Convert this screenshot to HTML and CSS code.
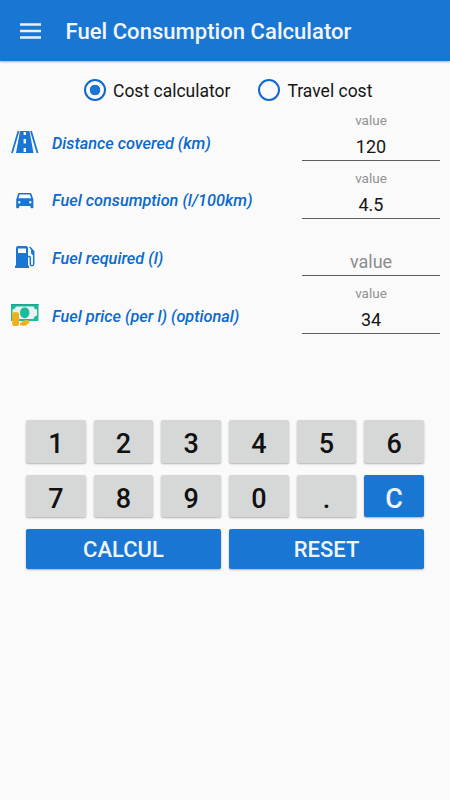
FILE: index.html
```html
<!DOCTYPE html>
<html lang="en">
<head>
    <meta charset="UTF-8">
    <meta name="viewport" content="width=device-width, initial-scale=1.0">
    <title>Fuel Consumption Calculator</title>
    <link rel="stylesheet" href="styles.css">
</head>
<body>
    <header class="app-bar">
        <svg class="menu-icon" width="21" height="16" viewBox="0 0 21 16">
            <path d="M0 1.5h21M0 8h21M0 14.5h21" stroke="#e9f1fa" stroke-width="2.3"/>
        </svg>
        <h1>Fuel Consumption Calculator</h1>
    </header>

    <div class="mode-select">
        <label class="mode">
            <input type="radio" name="mode" value="cost" checked>
            <span>Cost calculator</span>
        </label>
        <label class="mode">
            <input type="radio" name="mode" value="travel">
            <span>Travel cost</span>
        </label>
    </div>

    <form class="fields" id="calc-form">
        <div class="row">
            <svg class="row-icon" width="28" height="24" viewBox="0 0 28 24">
                <path fill="#1976d2" d="M9 1h9.5l4 22H5z"/>
                <path stroke="#1976d2" stroke-width="1.8" d="M7.5 1L1 23M20 1l6.5 22"/>
                <path stroke="#fafafa" stroke-width="2.4" d="M13.8 2v3M13.8 9v4.5M13.8 18v4"/>
            </svg>
            <label for="distance">Distance covered (km)</label>
            <div class="field">
                <span class="hint">value</span>
                <input type="text" id="distance" value="120">
            </div>
        </div>
        <div class="row">
            <svg class="row-icon" width="28" height="24" viewBox="0 0 28 24">
                <path fill="#1976d2" fill-rule="evenodd" d="M20.5 5.9c-.2-.6-.6-.9-1.200-.9H8.200c-.6 0-1 .3-1.200.9L5.200 11.400v8c0 .5.3.8.7.8h1.500c.5 0 .8-.3.8-.8v-1.400h11.300v1.400c0 .5.3.8.8.8h1.300c.5 0 .8-.3.8-.8v-8zM8.300 15.400a1.200 1.200 0 1 1 0-2.400 1.200 1.200 0 0 1 0 2.400zm11 0a1.200 1.200 0 1 1 0-2.400 1.200 1.200 0 0 1 0 2.400zM7.400 10.200l1.200-3.600h10.300l1.200 3.600z"/>
            </svg>
            <label for="consumption">Fuel consumption (l/100km)</label>
            <div class="field">
                <span class="hint">value</span>
                <input type="text" id="consumption" value="4.5">
            </div>
        </div>
        <div class="row">
            <svg class="row-icon" width="28" height="24" viewBox="0 0 28 24">
                <path fill="#1976d2" fill-rule="evenodd" d="M7 1h8q2 0 2 2v17.500h1V23H4v-2.500h1V3q0-2 2-2zm0 2.600V8h8V3.600z"/>
                <path fill="none" stroke="#1976d2" stroke-width="1.500" d="M17 11.500h1.300q1 0 1 1.200v6.300q0 1.700 1.700 1.700t1.700-1.700V6.500L18.600 2"/>
                <path fill="#1976d2" d="M20 5l3 1v4h-1.500Q20 9 20 7.500z"/>
            </svg>
            <label for="required">Fuel required (l)</label>
            <div class="field">
                <span class="hint"></span>
                <input type="text" id="required" placeholder="value">
            </div>
        </div>
        <div class="row">
            <svg class="row-icon" width="28" height="24" viewBox="0 0 28 24">
                <path fill="#1abc9c" d="M0 1h27.500v17H0z"/>
                <path fill="#17a78b" d="M0 1h27.500v1.200H0z"/>
                <path fill="#ecf0f1" d="M5 3.500h17.500q.5 2.500 3.500 3v6q-3 .5-3.500 3.500H5q-.5-3-3.500-3.500v-6q3-.5 3.500-3z"/>
                <ellipse cx="13.700" cy="9.700" rx="4.700" ry="5.500" fill="#1abc9c"/>
                <rect x="1.200" y="9" width="6.800" height="14" rx="2" fill="#f5b81c"/>
                <path stroke="#e39a16" stroke-width=".6" d="M1.500 11.800h6.200M1.500 14.300h6.200M1.500 16.800h6.200M1.500 19.300h6.200M1.800 21.800h5.800"/>
                <ellipse cx="14.500" cy="19.300" rx="4.200" ry="2.200" fill="#f5b81c" transform="rotate(-12 14.500 19.300)"/>
                <ellipse cx="12.500" cy="21" rx="3.500" ry="1.700" fill="#f0a91a"/>
            </svg>
            <label for="price">Fuel price (per l) (optional)</label>
            <div class="field">
                <span class="hint">value</span>
                <input type="text" id="price" value="34">
            </div>
        </div>
    </form>

    <div class="keypad">
        <button type="button">1</button>
        <button type="button">2</button>
        <button type="button">3</button>
        <button type="button">4</button>
        <button type="button">5</button>
        <button type="button">6</button>
        <button type="button">7</button>
        <button type="button">8</button>
        <button type="button">9</button>
        <button type="button">0</button>
        <button type="button">.</button>
        <button type="button" class="blue">C</button>
        <button type="button" class="blue action">CALCUL</button>
        <button type="button" class="blue action">RESET</button>
    </div>
</body>
</html>
```
FILE: styles.css
```css
* {
    box-sizing: border-box;
}
body {
    font-family: Roboto, sans-serif;
    margin: 0;
    min-height: 100vh;
    background-color: #fafafa;
    color: #151515;
}
.app-bar {
    display: flex;
    align-items: center;
    height: 61px;
    padding-left: 20px;
    background-color: #1976d2;
    box-shadow: 0 1px 2px rgba(0, 0, 0, 0.3);
}
.app-bar h1 {
    margin: 1px 0 0 24.5px;
    font-size: 22.1px;
    font-weight: 500;
    color: #f1f6fc;
    white-space: nowrap;
}
.mode-select {
    display: flex;
    gap: 28px;
    height: 52px;
    padding: 6px 0 0 84px;
}
.mode {
    display: flex;
    align-items: center;
    height: 46px;
    font-size: 17.5px;
    white-space: nowrap;
}
.mode span {
    padding-top: 1px;
}
.mode input {
    appearance: none;
    width: 22px;
    height: 22px;
    margin: 0 7px 0 0;
    border: 2px solid #1068cf;
    border-radius: 50%;
}
.mode input:checked {
    background: radial-gradient(circle, #1976d2 5px, transparent 5.6px);
}
.fields {
    padding: 0 10px;
}
.row {
    display: flex;
    align-items: center;
    height: 57.6px;
}
.row-icon {
    margin: 1px 13px 0 1px;
}
.row label {
    flex: 1;
    padding-top: 3px;
    font-size: 16.3px;
    font-weight: 500;
    font-style: italic;
    color: #0b69cb;
    white-space: nowrap;
}
.field {
    width: 138px;
    height: 48px;
    margin-top: -9px;
    border-bottom: 1px solid #5f5f5f;
    text-align: center;
}
.hint {
    display: block;
    height: 20px;
    font-size: 13.5px;
    line-height: 15px;
    color: #929292;
}
.field input {
    display: block;
    width: 100%;
    height: 27px;
    padding: 0;
    border: none;
    outline: none;
    background: none;
    font-family: inherit;
    font-size: 18px;
    text-align: center;
    color: #151515;
}
.field input::placeholder {
    color: #8c8c8c;
}
.keypad {
    display: grid;
    grid-template-columns: repeat(6, 1fr);
    grid-template-rows: 43px 42px 40px;
    gap: 12px 8px;
    padding: 76.6px 26px 0;
}
.keypad button {
    padding: 6px 0 0;
    border: none;
    border-radius: 2px;
    background-color: #d6d8d7;
    box-shadow: 0 1px 2px rgba(0, 0, 0, 0.3);
    font-family: inherit;
    font-size: 27px;
    font-weight: 500;
    color: #111;
}
.keypad .blue {
    background-color: #1976d2;
    color: #eef4fb;
}
.keypad .action {
    grid-column: span 3;
    padding-top: 2px;
    font-size: 22px;
}
```
